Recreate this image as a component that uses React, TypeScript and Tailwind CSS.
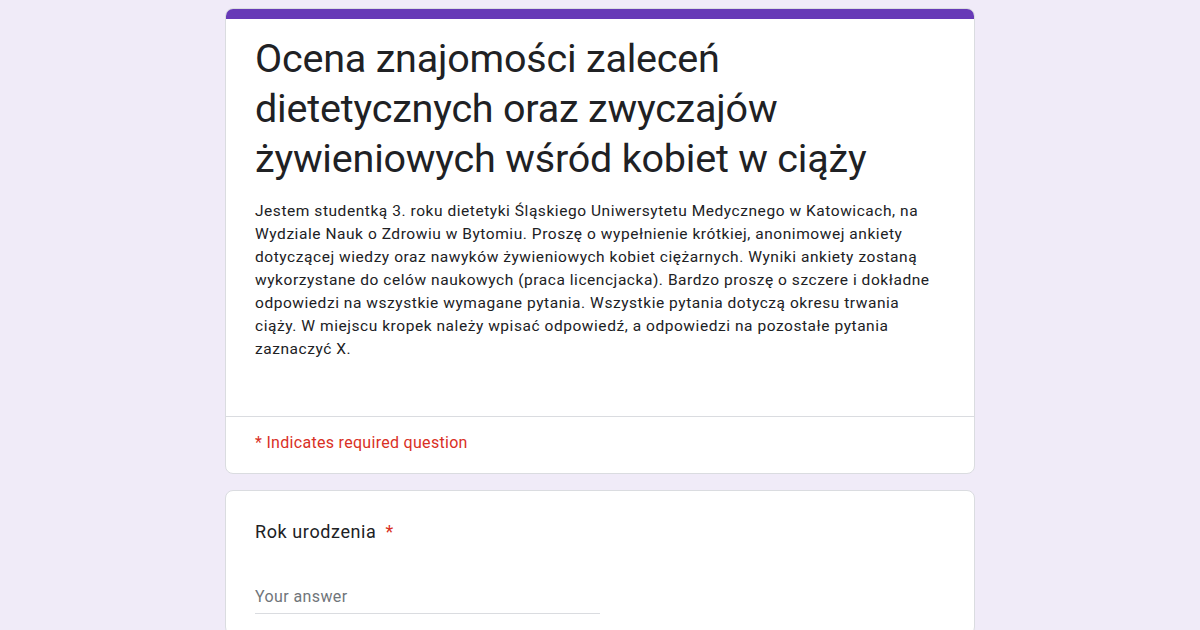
export default function App() {
  return (
    <div className="min-h-[630px] bg-[#f0ebf8] flex flex-col items-center pt-2 gap-4 font-['Roboto',sans-serif] text-[#202124]">
      {/* Header card */}
      <div className="w-[750px] bg-white rounded-lg border border-[#dadce0] overflow-hidden">
        <div className="h-[10px] bg-[#673ab7]" />
        <div className="px-[29px] pt-[15px] pb-[55px]">
          <h1 className="text-[39.5px] leading-[50px] font-normal tracking-[-0.2px]">
            Ocena znajomości zaleceń dietetycznych oraz zwyczajów żywieniowych wśród kobiet w ciąży
          </h1>
          <p className="mt-[16px] text-[15.5px] leading-[23px] tracking-[0.55px]">
            Jestem studentką 3. roku dietetyki Śląskiego Uniwersytetu Medycznego w Katowicach, na Wydziale Nauk o Zdrowiu w Bytomiu. Proszę o wypełnienie krótkiej, anonimowej ankiety dotyczącej wiedzy oraz nawyków żywieniowych kobiet ciężarnych. Wyniki ankiety zostaną wykorzystane do celów naukowych (praca licencjacka). Bardzo proszę o szczere i dokładne odpowiedzi na wszystkie wymagane pytania. Wszystkie pytania dotyczą okresu trwania ciąży. W miejscu kropek należy wpisać odpowiedź, a odpowiedzi na pozostałe pytania zaznaczyć X.
          </p>
        </div>
        <div className="border-t border-[#dadce0] px-[29px] pt-[14px] pb-[18px]">
          <p className="text-[16px] leading-[24px] tracking-[0.3px] text-[#d93025]">* Indicates required question</p>
        </div>
      </div>

      {/* Question card */}
      <div className="w-[750px] bg-white rounded-lg border border-[#dadce0] px-[29px] pt-[28px] pb-[20px]">
        <div className="text-[18px] leading-[26px] tracking-[0.6px]">
          Rok urodzenia <span className="text-[#d93025] ml-1">*</span>
        </div>
        <div className="mt-[40px] w-[345px] border-b border-[#dadce0] pb-[4px]">
          <span className="text-[16px] leading-[24px] tracking-[0.4px] text-[#70757a]">Your answer</span>
        </div>
      </div>
    </div>
  );
}
